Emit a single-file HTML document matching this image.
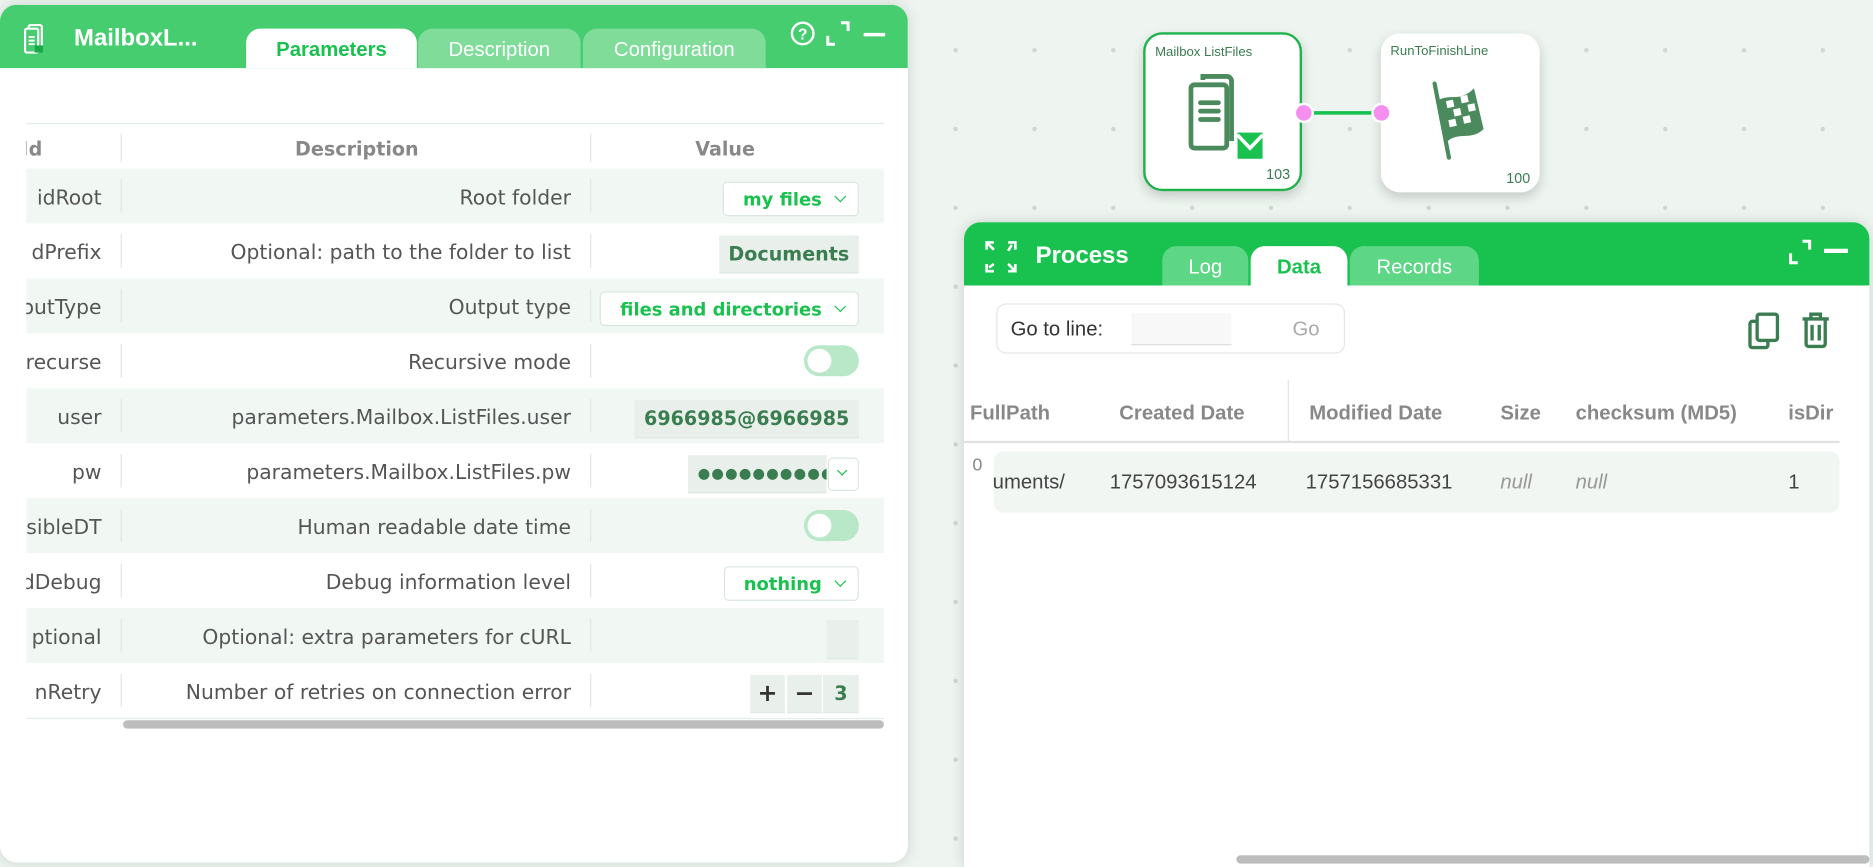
<!DOCTYPE html>
<html><head><meta charset="utf-8"><style>
*{box-sizing:border-box;margin:0;padding:0}
html,body{width:1873px;height:865px;overflow:hidden;background:#eef5f0}
#w{position:absolute;left:0;top:0;width:1568px;height:724px;transform:scale(1.19452);transform-origin:0 0;font-family:"DejaVu Sans","Liberation Sans",sans-serif;
background-color:#eef5f0;background-image:radial-gradient(circle,#d0d6d2 1.6px,transparent 2.1px);background-size:66px 66px;background-position:-25px 9px}
.abs{position:absolute}
.panel{position:absolute;background:#fff;border-radius:14px;overflow:hidden;box-shadow:0 0 12px rgba(0,0,0,.14)}
.hdr{position:absolute;left:0;top:0;right:0}
.tab{position:absolute;border-radius:12px 12px 0 0;color:#fff;font-size:17px;text-align:center;font-family:"Liberation Sans",sans-serif}
.row{position:absolute;left:22px;width:718px;height:46px;font-size:17px;color:#555;overflow:hidden}
.row.s{background:#f1f8f4}
.row .id{position:absolute;right:655px;top:15px;white-space:nowrap}
.row .de{position:absolute;right:262px;top:15px;white-space:nowrap}
.sep{position:absolute;width:1px;background:#dde8e2}
.row .sep{top:9px;height:28px}
.val{position:absolute;right:21px;white-space:nowrap;font-weight:bold}
.sel{top:11px;height:29px;border:1px solid #dbe6df;border-radius:4px;color:#19c24f;font-size:15px;padding:5px 30px 0 16px;background:#fff}
.sel:after{content:"";position:absolute;right:11px;top:8px;width:6px;height:6px;border-right:1.5px solid #19c24f;border-bottom:1.5px solid #19c24f;transform:rotate(45deg)}
.box{top:10px;height:32px;background:#e9f0eb;color:#3a7d50;font-size:16px;padding:6px 8px 0;border-bottom:1px solid #dfe8e2}
.tog{position:absolute;right:21px;top:10px;width:46px;height:26px;border-radius:13px;background:#b8e8c8}
.tog:before{content:"";position:absolute;left:3px;top:3px;width:20px;height:20px;border-radius:50%;background:#fff}
.node{position:absolute;width:133px;height:133px;background:#fff;border-radius:16px;box-shadow:0 4px 10px rgba(0,0,0,.18);font-family:"Liberation Sans",sans-serif;color:#3a7d50}
.node .t{position:absolute;left:8px;top:9px;font-size:11px}
.node .n{position:absolute;right:8px;bottom:5px;font-size:12px}
.th{position:absolute;top:336px;font-weight:bold;color:#888;font-size:17px;font-family:"Liberation Sans",sans-serif;white-space:nowrap}
.td{position:absolute;top:394px;color:#444;font-size:17px;font-family:"Liberation Sans",sans-serif;white-space:nowrap}
</style></head><body><div id="w">

<div class="panel" style="left:0;top:4px;width:760px;height:718px">
 <div class="hdr" style="height:53px;background:#45cd70"></div>
 <svg class="abs" style="left:20px;top:16px" width="24" height="30" viewBox="0 0 24 30"><rect x="4" y="1" width="11" height="20" rx="1.5" fill="none" stroke="#fff" stroke-width="1.8"/><rect x="1" y="4" width="11" height="20" rx="1.5" fill="#45cd70" stroke="#fff" stroke-width="1.8"/><path d="M4 11h5M4 14h5M4 17h5" stroke="#fff" stroke-width="1.6"/><rect x="9" y="18" width="7" height="6" fill="#19a84a"/></svg>
 <div class="abs" style="left:62px;top:17px;color:#fff;font-weight:bold;font-size:20px;font-family:'Liberation Sans',sans-serif">MailboxL...</div>
 <div class="tab" style="left:206px;top:20px;width:143px;height:33px;background:#fff;color:#19c24f;font-weight:bold;padding-top:8px">Parameters</div>
 <div class="tab" style="left:350px;top:20px;width:136px;height:33px;background:#7fdc99;padding-top:8px">Description</div>
 <div class="tab" style="left:488px;top:20px;width:153px;height:33px;background:#7fdc99;padding-top:8px">Configuration</div>
 <svg class="abs" style="left:660px;top:13px" width="86" height="24" viewBox="0 0 86 24"><circle cx="12" cy="11" r="9" fill="none" stroke="#fff" stroke-width="2"/><text x="12" y="16" fill="#fff" font-size="13" font-weight="bold" text-anchor="middle" font-family="Liberation Sans">?</text><path d="M33 13v7h6M44 2h6v7" fill="none" stroke="#fff" stroke-width="2.5"/><path d="M63 12h18" stroke="#fff" stroke-width="3"/></svg>

 <div class="abs" style="left:22px;top:99px;width:718px;height:1px;background:#e3ebe6"></div>
 <div class="abs" style="left:22px;top:99px;width:718px;height:38px;font-weight:bold;color:#888;font-size:16px;overflow:hidden">
  <span class="abs" style="left:-4px;top:12px">Id</span>
  <div class="sep" style="left:79px;top:9px;height:24px"></div>
  <span class="abs" style="left:225px;top:12px">Description</span>
  <div class="sep" style="left:472px;top:9px;height:24px"></div>
  <span class="abs" style="left:560px;top:12px">Value</span>
 </div>
 <div class="row s" style="top:137px"><span class="id">idRoot</span><div class="sep" style="left:79px"></div><span class="de">Root folder</span><div class="sep" style="left:472px"></div><span class="val sel">my files</span></div>
 <div class="row" style="top:183px"><span class="id">dPrefix</span><div class="sep" style="left:79px"></div><span class="de">Optional: path to the folder to list</span><div class="sep" style="left:472px"></div><span class="val box">Documents</span></div>
 <div class="row s" style="top:229px"><span class="id">outType</span><div class="sep" style="left:79px"></div><span class="de">Output type</span><div class="sep" style="left:472px"></div><span class="val sel">files and directories</span></div>
 <div class="row" style="top:275px"><span class="id">recurse</span><div class="sep" style="left:79px"></div><span class="de">Recursive mode</span><div class="sep" style="left:472px"></div><div class="tog"></div></div>
 <div class="row s" style="top:321px"><span class="id">user</span><div class="sep" style="left:79px"></div><span class="de">parameters.Mailbox.ListFiles.user</span><div class="sep" style="left:472px"></div><span class="val box">6966985@6966985</span></div>
 <div class="row" style="top:367px"><span class="id">pw</span><div class="sep" style="left:79px"></div><span class="de">parameters.Mailbox.ListFiles.pw</span><div class="sep" style="left:472px"></div><span class="val box" style="right:48px;width:116px;overflow:hidden;letter-spacing:1px;font-size:12px;padding-top:8px">●●●●●●●●●●</span><span class="abs" style="right:21px;top:12px;width:26px;height:28px;border:1px solid #dbe6df;border-radius:4px"><span class="abs" style="left:8px;top:7px;width:6px;height:6px;border-right:1.5px solid #19c24f;border-bottom:1.5px solid #19c24f;transform:rotate(45deg)"></span></span></div>
 <div class="row s" style="top:413px"><span class="id">sibleDT</span><div class="sep" style="left:79px"></div><span class="de">Human readable date time</span><div class="sep" style="left:472px"></div><div class="tog"></div></div>
 <div class="row" style="top:459px"><span class="id">dDebug</span><div class="sep" style="left:79px"></div><span class="de">Debug information level</span><div class="sep" style="left:472px"></div><span class="val sel">nothing</span></div>
 <div class="row s" style="top:505px"><span class="id">ptional</span><div class="sep" style="left:79px"></div><span class="de">Optional: extra parameters for cURL</span><div class="sep" style="left:472px"></div><span class="val box" style="width:27px;height:33px"></span></div>
 <div class="row" style="top:551px"><span class="id">nRetry</span><div class="sep" style="left:79px"></div><span class="de">Number of retries on connection error</span><div class="sep" style="left:472px"></div>
  <span class="val box" style="right:83px;width:29px;padding:3px 0 0;text-align:center;font-size:20px;color:#333">+</span>
  <span class="val box" style="right:52px;width:29px;padding:3px 0 0;text-align:center;font-size:20px;color:#333">−</span>
  <span class="val box" style="width:30px;padding:6px 0 0;text-align:center">3</span></div>
 <div class="abs" style="left:22px;top:597px;width:718px;height:1px;background:#e3ebe6"></div>
 <div class="abs" style="left:103px;top:599px;width:637px;height:7px;border-radius:4px;background:#bdbdbd"></div>
</div>

<div class="abs" style="left:1090px;top:93px;width:66px;height:3px;background:#19c24f"></div>
<div class="node" style="left:957px;top:27px;border:2px solid #1fb24a">
 <div class="t">Mailbox ListFiles</div>
 <svg class="abs" style="left:36px;top:32px" width="62" height="72" viewBox="0 0 62 72"><path d="M12 6V3h20a4 4 0 0 1 4 4v50" fill="none" stroke="#4a8a5c" stroke-width="4"/><rect x="2" y="10" width="30" height="53" rx="3" fill="none" stroke="#4a8a5c" stroke-width="4"/><path d="M10 25h15M10 32h15M10 39h15" stroke="#4a8a5c" stroke-width="4" stroke-linecap="round"/><rect x="41" y="50" width="21" height="22" fill="#19c24f"/><path d="M41 52l10.5 11L62 52" fill="none" stroke="#fff" stroke-width="3"/></svg>
 <div class="n">103</div>
</div>
<div class="node" style="left:1156px;top:28px">
 <div class="t">RunToFinishLine</div>
 <svg class="abs" style="left:40px;top:38px" width="50" height="68" viewBox="0 0 50 68"><path d="M5 4l12 62" stroke="#4a8a5c" stroke-width="3.5" stroke-linecap="round"/><path d="M8 18c10-6 18 2 30-10l8 34c-10 10-20 2-30 10z" fill="#4a8a5c"/><g fill="#fff"><rect x="15" y="18" width="6" height="6" transform="rotate(-12 18 21)"/><rect x="27" y="14" width="6" height="6" transform="rotate(-12 30 17)"/><rect x="21" y="25" width="6" height="6" transform="rotate(-12 24 28)"/><rect x="33" y="21" width="6" height="6" transform="rotate(-12 36 24)"/><rect x="17" y="34" width="6" height="6" transform="rotate(-12 20 37)"/><rect x="29" y="31" width="6" height="6" transform="rotate(-12 32 34)"/></g></svg>
 <div class="n">100</div>
</div>
<div class="abs" style="left:1083px;top:86px;width:17px;height:17px;border-radius:50%;background:#f48ff0;border:2px solid #fff"></div>
<div class="abs" style="left:1148px;top:86px;width:17px;height:17px;border-radius:50%;background:#f48ff0;border:2px solid #fff"></div>

<div class="panel" style="left:807px;top:186px;width:758px;height:540px;border-radius:14px 14px 0 0">
 <div class="hdr" style="height:53px;background:#19c24f"></div>
 <svg class="abs" style="left:16px;top:14px" width="30" height="30" viewBox="0 0 30 30" fill="none" stroke="#fff" stroke-width="2.2"><path d="M3 9V3h6M3 3l6 6M27 9V3h-6M24 5l-3 5M3 21v6h6M5 24l4-3M27 21v6h-6M27 27l-6-6"/></svg>
 <div class="abs" style="left:60px;top:17px;color:#fff;font-weight:bold;font-size:20px;font-family:'Liberation Sans',sans-serif">Process</div>
 <div class="tab" style="left:166px;top:20px;width:72px;height:33px;background:#5dd785;padding-top:8px">Log</div>
 <div class="tab" style="left:240px;top:20px;width:81px;height:33px;background:#fff;color:#19c24f;font-weight:bold;padding-top:8px">Data</div>
 <div class="tab" style="left:323px;top:20px;width:108px;height:33px;background:#5dd785;padding-top:8px">Records</div>
 <svg class="abs" style="left:690px;top:14px" width="55" height="26" viewBox="0 0 55 26"><path d="M2 12v8h6M12 2h6v7" fill="none" stroke="#fff" stroke-width="2.5"/><path d="M30 10h20" stroke="#fff" stroke-width="3.5"/></svg>

 <div class="abs" style="left:27px;top:68px;width:292px;height:42px;border:1px solid #e6e6e6;border-radius:8px;font-family:'Liberation Sans',sans-serif;font-size:17px">
  <span class="abs" style="left:11px;top:11px;color:#333">Go to line:</span>
  <span class="abs" style="left:112px;top:7px;width:84px;height:27px;background:#f8f8f8;border-bottom:1px solid #ddd"></span>
  <span class="abs" style="left:247px;top:11px;color:#aaa">Go</span>
 </div>
 <svg class="abs" style="left:655px;top:75px" width="30" height="32" viewBox="0 0 30 32" fill="none" stroke="#3a7d50" stroke-width="2.8"><rect x="9" y="2" width="17" height="22" rx="2"/><path d="M9 8H5a2 2 0 0 0-2 2v18a2 2 0 0 0 2 2h11a2 2 0 0 0 2-2v-4"/></svg>
 <svg class="abs" style="left:700px;top:74px" width="26" height="32" viewBox="0 0 26 32" fill="none" stroke="#3a7d50" stroke-width="2.8"><path d="M2 7h22M9 7V3h8v4M5 7v21a2 2 0 0 0 2 2h12a2 2 0 0 0 2-2V7M10 12v13M16 12v13"/></svg>

 <div class="abs" style="left:271px;top:132px;width:1px;height:52px;background:#e2e2e2"></div>
 <div class="abs" style="left:0;top:183px;width:733px;height:2px;background:#e2e2e2"></div>
 <div class="abs" style="left:25px;top:192px;width:708px;height:51px;border-radius:8px;background:#f2f6f3"></div>
</div>
<div class="th" style="left:812px">FullPath</div>
<div class="th" style="left:937px">Created Date</div>
<div class="th" style="left:1096px">Modified Date</div>
<div class="th" style="left:1256px">Size</div>
<div class="th" style="left:1319px">checksum (MD5)</div>
<div class="th" style="left:1497px">isDir</div>
<div class="td" style="left:814px;top:381px;color:#888;font-size:15px">0</div>
<div class="td" style="left:831px">uments/</div>
<div class="td" style="left:929px">1757093615124</div>
<div class="td" style="left:1093px">1757156685331</div>
<div class="td" style="left:1256px;color:#999;font-style:italic">null</div>
<div class="td" style="left:1319px;color:#999;font-style:italic">null</div>
<div class="td" style="left:1497px">1</div>
<div class="abs" style="left:1035px;top:716px;width:530px;height:7px;border-radius:4px;background:#bdbdbd"></div>
</div></body></html>
